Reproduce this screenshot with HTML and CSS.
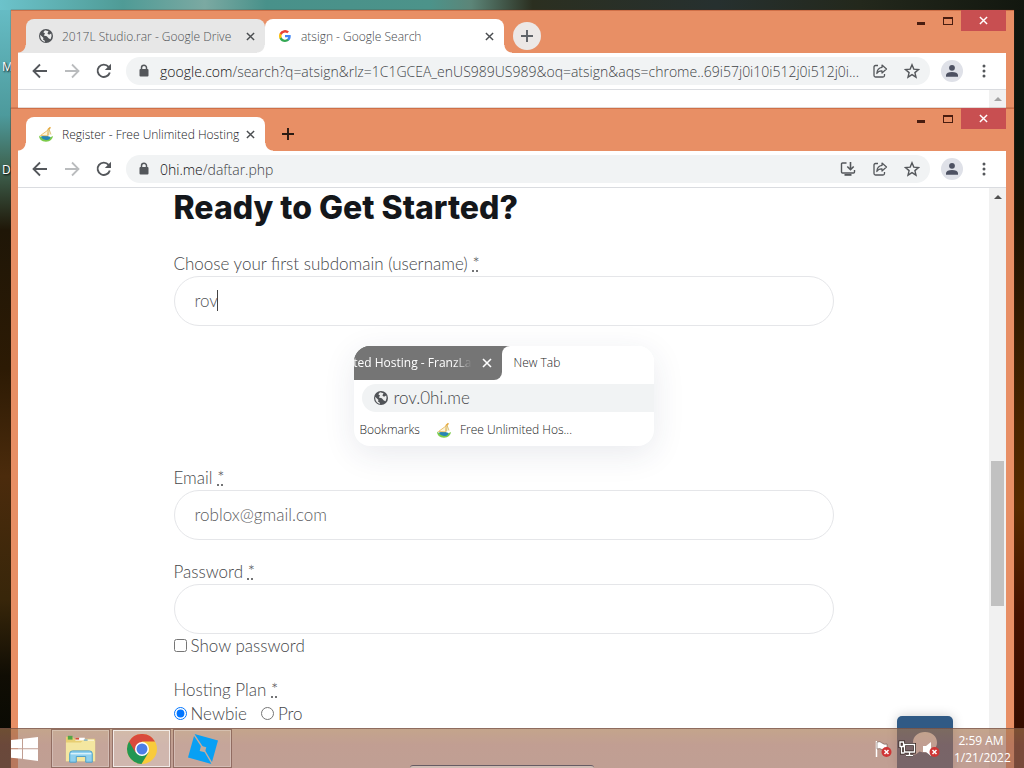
FILE: index.html
```
<!DOCTYPE html>
<html lang="en">
<head>
    <meta charset="UTF-8">
    <meta name="viewport" content="width=device-width, initial-scale=1.0">
    <title>Register - Free Unlimited Hosting</title>
    <link rel="stylesheet" href="styles.css">
</head>
<body>
    <!-- shared icons -->
    <svg class="sprite" aria-hidden="true">
        <symbol id="i-back" viewBox="0 0 16 16"><path d="M15 8H2M8 1.500L1.500 8L8 14.500" fill="none" stroke="currentColor" stroke-width="1.800"/></symbol>
        <symbol id="i-forward" viewBox="0 0 16 16"><path d="M1 8H14M8 1.500L14.500 8L8 14.500" fill="none" stroke="currentColor" stroke-width="1.800"/></symbol>
        <symbol id="i-reload" viewBox="0 0 16 16"><path d="M13.800 9.500A6.200 6.200 0 1 1 12.600 3.800" fill="none" stroke="currentColor" stroke-width="1.900"/><path d="M15 .8V7H8.800z" fill="currentColor"/></symbol>
        <symbol id="i-lock" viewBox="0 0 16 16"><rect x="3.500" y="6" width="9" height="7.500" rx="1" fill="currentColor"/><path d="M5.500 7V4.800a2.500 2.500 0 0 1 5 0V7" fill="none" stroke="currentColor" stroke-width="1.500"/></symbol>
        <symbol id="i-share" viewBox="0 0 16 16"><path d="M6 2.500H3.500Q2 2.500 2 4V12.500Q2 14 3.500 14H11Q12.500 14 12.500 12.500V11" fill="none" stroke="currentColor" stroke-width="1.300"/><path d="M10 2L14.500 6L10 10V7.800Q6.500 7.600 4.800 10.500Q5.200 5 10 4.400z" fill="none" stroke="currentColor" stroke-width="1.200" stroke-linejoin="round"/></symbol>
        <symbol id="i-star" viewBox="0 0 16 16"><path d="M8 1.800L9.800 6.100L14.500 6.500L10.900 9.600L12 14.200L8 11.700L4 14.200L5.100 9.600L1.500 6.500L6.200 6.100z" fill="none" stroke="currentColor" stroke-width="1.400"/></symbol>
        <symbol id="i-install" viewBox="0 0 16 16"><path d="M6.500 2H2.500Q1.500 2 1.500 3V11Q1.500 12 2.500 12H13.500Q14.500 12 14.500 11V9" fill="none" stroke="currentColor" stroke-width="1.400"/><path d="M4.500 13H11.500V14.800H4.500z" fill="currentColor"/><path d="M10.500 1V8M7.300 5.500L10.500 8.700L13.700 5.500" fill="none" stroke="currentColor" stroke-width="1.600"/></symbol>
        <symbol id="i-user" viewBox="0 0 22 22"><circle cx="11" cy="11" r="11" fill="#dfe1e8"/><circle cx="11" cy="7.800" r="2.900" fill="#4d5162"/><path d="M5 16.800V15Q5.500 12 11 12T17 15V16.800z" fill="#4d5162"/></symbol>
        <symbol id="i-menu" viewBox="0 0 16 16"><circle cx="8" cy="3" r="1.500"/><circle cx="8" cy="8" r="1.500"/><circle cx="8" cy="13" r="1.500"/></symbol>
        <symbol id="i-close" viewBox="0 0 10 10"><path d="M1 1L9 9M9 1L1 9" fill="none" stroke="currentColor" stroke-width="1.600"/></symbol>
        <symbol id="i-plus" viewBox="0 0 12 12"><path d="M6 0V12M0 6H12" fill="none" stroke="currentColor" stroke-width="1.900"/></symbol>
        <symbol id="i-globe" viewBox="0 0 16 16"><circle cx="8" cy="8" r="7" fill="#505357"/><path d="M2.200 6.800L5.500 10L5 11.500L6.800 12.800L7 14Q3 13 2.300 9zM7 2.300L5.300 4.200L7 5.600L5.800 7.400L8.800 8.200L10.800 10.600L12.600 11.300Q14.400 8.500 13.200 5.500L11 6.800L9.400 5.600L10.500 3.200z" fill="#eceded"/></symbol>
        <symbol id="i-google" viewBox="0 0 18 18"><path d="M17.600 9.200c0-.6-.1-1.200-.2-1.800H9v3.500h4.800a4.100 4.100 0 0 1-1.800 2.700v2.300h2.900c1.700-1.600 2.700-3.900 2.700-6.700z" fill="#4285f4"/><path d="M9 18c2.400 0 4.500-.8 6-2.200l-3-2.200a5.400 5.400 0 0 1-8-2.800H1v2.300A9 9 0 0 0 9 18z" fill="#34a853"/><path d="M4 10.700a5.400 5.400 0 0 1 0-3.400V5H1a9 9 0 0 0 0 8z" fill="#fbbc05"/><path d="M9 3.600c1.300 0 2.500.5 3.400 1.300L15 2.300A9 9 0 0 0 1 5l3 2.300a5.400 5.400 0 0 1 5-3.700z" fill="#ea4335"/></symbol>
        <symbol id="i-host" viewBox="0 0 16 16"><path d="M1 9.500Q1 15.500 8 15.800Q14.500 15 15 10Q12 12 8 11.500Q3 11.500 1 9.500z" fill="#7ccb4a"/><path d="M3 10.500Q7 9 12.500 11Q12 14.500 8 14Q4 13.500 3 10.500z" fill="#2585b5"/><path d="M2.500 9.500L10 4L9.500 9.800z" fill="#fbf3d8" stroke="#e5b450" stroke-width=".8"/><path d="M10.500 9.500L11 3L13 8.500" fill="#f5f0dc" stroke="#d6b55e" stroke-width=".8"/><path d="M9 3.500L12 .8L13 2L10.500 3.800z" fill="#e5a533"/></symbol>
    </svg>

    <div class="desktop">
        <span class="shortcut shortcut-m">M</span>
        <span class="shortcut shortcut-d">D</span>

        <!-- back window -->
        <section class="window window-back">
            <header class="titlebar">
                <div class="tabs">
                    <div class="tab tab-inactive">
                        <svg class="favicon"><use href="#i-globe"/></svg>
                        <span class="tab-title">2017L Studio.rar - Google Drive</span>
                        <button class="tab-close" aria-label="Close tab"><svg><use href="#i-close"/></svg></button>
                    </div>
                    <div class="tab tab-unfocused">
                        <svg class="favicon favicon-google"><use href="#i-google"/></svg>
                        <span class="tab-title">atsign - Google Search</span>
                        <button class="tab-close" aria-label="Close tab"><svg><use href="#i-close"/></svg></button>
                    </div>
                    <button class="new-tab new-tab-round" aria-label="New tab"><svg><use href="#i-plus"/></svg></button>
                </div>
                <div class="controls">
                    <button class="minimize" aria-label="Minimize"></button>
                    <button class="maximize" aria-label="Maximize"></button>
                    <button class="close" aria-label="Close"><svg><use href="#i-close"/></svg></button>
                </div>
            </header>
            <nav class="toolbar">
                <button class="tool" aria-label="Back"><svg><use href="#i-back"/></svg></button>
                <button class="tool disabled" aria-label="Forward"><svg><use href="#i-forward"/></svg></button>
                <button class="tool" aria-label="Reload"><svg><use href="#i-reload"/></svg></button>
                <div class="omnibox">
                    <svg class="lock"><use href="#i-lock"/></svg>
                    <label for="url_back">google.com</label>
                    <input type="text" id="url_back" value="/search?q=atsign&amp;rlz=1C1GCEA_enUS989US989&amp;oq=atsign&amp;aqs=chrome..69i57j0i10i512j0i512j0i...">
                    <button class="tool" aria-label="Share"><svg><use href="#i-share"/></svg></button>
                    <button class="tool" aria-label="Bookmark"><svg><use href="#i-star"/></svg></button>
                </div>
                <button class="profile" aria-label="Profile"><svg><use href="#i-user"/></svg></button>
                <button class="tool" aria-label="Menu"><svg><use href="#i-menu"/></svg></button>
            </nav>
            <div class="viewport">
                <div class="page"></div>
                <div class="scrollbar scrollbar-faded"><span class="arrow-up"></span></div>
            </div>
        </section>

        <!-- front window -->
        <section class="window window-front">
            <header class="titlebar">
                <div class="tabs">
                    <div class="tab">
                        <svg class="favicon"><use href="#i-host"/></svg>
                        <span class="tab-title">Register - Free Unlimited Hosting</span>
                        <button class="tab-close" aria-label="Close tab"><svg><use href="#i-close"/></svg></button>
                    </div>
                    <button class="new-tab" aria-label="New tab"><svg><use href="#i-plus"/></svg></button>
                </div>
                <div class="controls">
                    <button class="minimize" aria-label="Minimize"></button>
                    <button class="maximize" aria-label="Maximize"></button>
                    <button class="close" aria-label="Close"><svg><use href="#i-close"/></svg></button>
                </div>
            </header>
            <nav class="toolbar">
                <button class="tool" aria-label="Back"><svg><use href="#i-back"/></svg></button>
                <button class="tool disabled" aria-label="Forward"><svg><use href="#i-forward"/></svg></button>
                <button class="tool" aria-label="Reload"><svg><use href="#i-reload"/></svg></button>
                <div class="omnibox">
                    <svg class="lock"><use href="#i-lock"/></svg>
                    <label for="url_front">0hi.me</label>
                    <input type="text" id="url_front" value="/daftar.php">
                    <button class="tool" aria-label="Install"><svg><use href="#i-install"/></svg></button>
                    <button class="tool" aria-label="Share"><svg><use href="#i-share"/></svg></button>
                    <button class="tool" aria-label="Bookmark"><svg><use href="#i-star"/></svg></button>
                </div>
                <button class="profile" aria-label="Profile"><svg><use href="#i-user"/></svg></button>
                <button class="tool" aria-label="Menu"><svg><use href="#i-menu"/></svg></button>
            </nav>
            <div class="viewport">
                <main class="page">
                    <form class="register">
                        <h1>Ready to Get Started?</h1>
                        <div class="field">
                            <label for="username">Choose your first subdomain (username) <abbr title="required">*</abbr></label>
                            <div class="input-wrap">
                                <input type="text" id="username" value="rov">
                                <span class="caret"></span>
                            </div>
                        </div>

                        <div class="preview">
                            <div class="preview-tabs">
                                <div class="preview-old">
                                    <span class="preview-title">ited Hosting - FranzLa</span>
                                    <svg class="preview-x"><use href="#i-close"/></svg>
                                </div>
                                <div class="preview-new">New Tab</div>
                            </div>
                            <div class="preview-url">
                                <svg><use href="#i-globe"/></svg>
                                <span>rov.0hi.me</span>
                            </div>
                            <div class="preview-bookmarks">
                                <span>Bookmarks</span>
                                <svg><use href="#i-host"/></svg>
                                <span>Free Unlimited Hos...</span>
                            </div>
                        </div>

                        <div class="field">
                            <label for="email">Email <abbr title="required">*</abbr></label>
                            <input type="email" id="email" placeholder="roblox@gmail.com">
                        </div>
                        <div class="field">
                            <label for="password">Password <abbr title="required">*</abbr></label>
                            <input type="password" id="password">
                            <div class="choices">
                                <label class="choice"><input type="checkbox" id="show_password">Show password</label>
                            </div>
                        </div>
                        <div class="field">
                            <span class="field-name">Hosting Plan <abbr title="required">*</abbr></span>
                            <div class="choices">
                                <label class="choice"><input type="radio" name="plan" checked>Newbie</label>
                                <label class="choice"><input type="radio" name="plan">Pro</label>
                            </div>
                        </div>
                    </form>
                    <button type="button" class="chat" aria-label="Chat">
                        <svg viewBox="0 0 26 26"><path d="M13 1C20 1 25 5.500 25 11.500S20 21.500 13.500 21.500Q10 21.500 7.500 20.500Q5 23.500 1 24Q4 21 3.500 17.500Q1 15 1 11.500C1 5.500 6 1 13 1z" fill="#fff"/></svg>
                    </button>
                </main>
                <div class="scrollbar"><span class="arrow-up"></span><span class="thumb"></span></div>
            </div>
        </section>

        <!-- taskbar -->
        <footer class="taskbar">
            <button class="start" aria-label="Start">
                <svg viewBox="0 0 28 24"><path d="M0 3L11 2V11.300H0zM12 1.800L27 0V11.300H12zM0 12.300H11V21.800L0 20.800zM12 12.300H27V24L12 22z" fill="#fff"/></svg>
            </button>
            <button class="task" aria-label="File Explorer">
                <svg viewBox="0 0 34 30"><path d="M1 4V2H8L10 4H32V28H1z" fill="#e8cf72"/><path d="M3 1H8V5H3z" fill="#53a648"/><path d="M11 3H21V6H11z" fill="#fff"/><path d="M11 3H15V5H11z" fill="#d3513a"/><path d="M20 5H31V8H20z" fill="#fff"/><path d="M20 5H24V7H20z" fill="#3f8bd0"/><path d="M1 8H17L19 6H32V28H1z" fill="#f4e6a0"/><path d="M5 29V20Q5 17 8 17H26Q29 17 29 20V29H22V23H12V29z" fill="#8fd0ee" stroke="#4a9dc9"/><path d="M6 20H28" stroke="#d7f1fb" stroke-width="1.500"/></svg>
            </button>
            <button class="task task-active" aria-label="Google Chrome">
                <svg viewBox="0 0 30 30"><circle cx="15" cy="15" r="15" fill="#f8cb3c"/><path d="M15 15L2 7.500A15 15 0 0 0 14.500 30L21.500 18.500z" fill="#219653"/><path d="M2 7.500A15 15 0 0 1 28 7.500H15L8.500 18.500z" fill="#d94a3d"/><circle cx="15" cy="15" r="7" fill="#fff"/><circle cx="15" cy="15" r="5.500" fill="#4c7ee8"/></svg>
            </button>
            <button class="task" aria-label="Roblox Studio">
                <svg viewBox="0 0 32 32"><path d="M7 0L32 7L25 32L0 25z" fill="#08a0f4"/><path d="M6 0L16 15L26 32" fill="none" stroke="#c5ab9c" stroke-width="1.500"/><path d="M13.800 12.500L19.500 14L18 19.500L12.500 18z" fill="#c5ab9c"/></svg>
            </button>
            <div class="tray">
                <svg viewBox="0 0 18 18"><path d="M2.500 1V17" stroke="#fff" stroke-width="1.500"/><path d="M3 2Q6 1 8 3T13 4V10Q10 11 8 9.500T3 9z" fill="#fff" stroke="#573d35" stroke-width=".5"/><circle cx="12.500" cy="12" r="5" fill="#cf3535"/><path d="M10.500 10L14.500 14M14.500 10L10.500 14" stroke="#fff" stroke-width="1.500"/></svg>
                <svg viewBox="0 0 18 18"><path d="M6.500 4.500H16.500V12H6.500zM11.500 12V15M8 15.500H15M3.500 7V13H6.500M2 2H5.500V6.500H2z" fill="none" stroke="#33231f" stroke-width="3"/><path d="M6.500 4.500H16.500V12H6.500zM11.500 12V15M8 15.500H15M3.500 7V13H6.500M2 2H5.500V6.500H2z" fill="none" stroke="#fff" stroke-width="1.400"/></svg>
                <svg viewBox="0 0 18 18"><path d="M1 6H4L9 2V16L4 12H1z" fill="#fff"/><circle cx="12.500" cy="12" r="5" fill="#cf3535"/><path d="M10.500 10L14.500 14M14.500 10L10.500 14" stroke="#fff" stroke-width="1.500"/></svg>
            </div>
            <div class="clock">
                <span>2:59 AM</span>
                <span>1/21/2022</span>
            </div>
        </footer>
    </div>
</body>
</html>
```
FILE: styles.css
```
* {
    box-sizing: border-box;
}

body {
    margin: 0;
    font-family: "Open Sans", "Noto Sans", sans-serif;
    font-size: 12px;
    font-weight: 300;
    color: #202124;
}

button {
    display: flex;
    align-items: center;
    justify-content: center;
    flex: none;
    padding: 0;
    border: none;
    background: none;
    color: inherit;
}

.sprite {
    position: absolute;
    width: 0;
    height: 0;
}

.desktop {
    position: relative;
    height: 100vh;
    overflow: hidden;
    background:
        linear-gradient(90deg, #6cc3cb, #4f9b96 12%, #7ba9a2 20%, #48918a 26%, #4c938a 42%, #5c8578 46%, #2b2f20 52%, #26302f 70%, #23281c 84%, #12170f) top / 100% 10px no-repeat,
        linear-gradient(#68bfc8, #4d9a9c 15%, #3f6350 22%, #1f1607 30%, #2c1a04 48%, #4b2b0c 62%, #38260a 78%, #100d04 88%, #050803) left / 50% 100% no-repeat,
        linear-gradient(#12170f, #0c150c 18%, #1c1202 28%, #4a2500 55%, #572b00 66%, #451200 80%, #2f0b00) right / 50% 100% no-repeat;
}

/* desktop labels that stick out behind the windows */
.shortcut {
    position: absolute;
    left: 2px;
    color: #fff;
    font-weight: 400;
    text-shadow: 1px 1px 2px #000;
}

.shortcut-m {
    top: 58px;
}

.shortcut-d {
    top: 161px;
}

/* windows */
.window {
    position: absolute;
    left: 11px;
    right: 10px;
    bottom: 0;
    display: flex;
    flex-direction: column;
    padding: 0 8px 0 7px;
    background: #e88f65;
    box-shadow: inset 0 1px #cf7048, 0 0 1px #5a2d18;
}

.window-back {
    top: 10px;
}

.window-front {
    top: 108px;
}

.titlebar {
    display: flex;
    flex: none;
    align-items: flex-start;
    justify-content: space-between;
    height: 43px;
}

.tabs {
    display: flex;
    padding: 9px 8px 0;
}

.tab {
    --tab: #fff;
    position: relative;
    display: flex;
    align-items: center;
    width: 239px;
    height: 34px;
    padding: 0 9px 0 12px;
    border-radius: 8px 8px 0 0;
    background: var(--tab);
}

.tab::before,
.tab::after {
    content: "";
    position: absolute;
    bottom: 0;
    width: 8px;
    height: 8px;
}

.tab::before {
    right: 100%;
    background: radial-gradient(circle at 0 0, transparent 7px, var(--tab) 8px);
}

.tab::after {
    left: 100%;
    background: radial-gradient(circle at 100% 0, transparent 7px, var(--tab) 8px);
}

.tab-inactive {
    --tab: #e7e7e7;
    color: #505356;
}

.tab-unfocused {
    color: #45484b;
}

.favicon {
    flex: none;
    width: 16px;
    height: 16px;
    margin-right: 8px;
}

.favicon-google {
    padding: 2px;
}

.tab-title {
    flex: 1;
    overflow: hidden;
    white-space: nowrap;
}

.tab-close {
    width: 12px;
    height: 16px;
    color: #4a4d50;
}

.tab-close svg {
    width: 9px;
    height: 9px;
}

.new-tab {
    width: 28px;
    height: 28px;
    margin: 3px 9px;
    border-radius: 50%;
    color: #2a1a12;
}

.new-tab-round {
    background: #ece8e6;
    color: #5f6368;
}

.new-tab svg {
    width: 12px;
    height: 12px;
}

.controls {
    display: flex;
    align-items: center;
}

.minimize {
    width: 8px;
    height: 3px;
    margin-top: 6px;
    background: #491d10;
}

.maximize {
    width: 10px;
    height: 8px;
    margin: 0 8px 0 18px;
    border: 1px solid #491d10;
    border-top-width: 2px;
}

.close {
    width: 45px;
    height: 21px;
    background: #c84f51;
    color: #fff;
}

.close svg {
    width: 9px;
    height: 9px;
}

.toolbar {
    display: flex;
    flex: none;
    align-items: center;
    height: 37px;
    padding: 0 6px;
    border-bottom: 1px solid #dadce0;
    background: #fff;
    color: #54575b;
}

.tool {
    width: 32px;
    height: 28px;
}

.tool svg {
    width: 16px;
    height: 16px;
    fill: currentColor;
}

.disabled {
    color: #babcbe;
}

.omnibox {
    display: flex;
    flex: 1;
    align-items: center;
    min-width: 0;
    height: 28px;
    margin: 0 6px;
    padding: 0 2px 0 10px;
    border-radius: 14px;
    background: #f1f3f4;
    font-size: 14px;
}

.lock {
    flex: none;
    width: 16px;
    height: 16px;
    margin-right: 8px;
}

.omnibox label {
    color: #101112;
}

.omnibox input {
    flex: 1;
    min-width: 0;
    padding: 0;
    border: none;
    outline: none;
    background: none;
    color: #3f4347;
    font: inherit;
    text-overflow: ellipsis;
}

.profile {
    width: 32px;
}

.profile svg {
    width: 22px;
    height: 22px;
}

.viewport {
    display: flex;
    flex: 1;
    min-height: 0;
    background: #fff;
}

.page {
    position: relative;
    flex: 1;
    overflow: hidden;
}

.scrollbar {
    display: flex;
    flex-direction: column;
    align-items: center;
    width: 17px;
    background: #f1f1f1;
}

.scrollbar::after {
    content: "";
    flex: 0 0 28%;
}

.arrow-up {
    flex: none;
    margin: 7px 0;
    border: 4px solid transparent;
    border-top: none;
    border-bottom-color: #505050;
}

.scrollbar-faded .arrow-up {
    border-bottom-color: #a3a3a3;
}

.thumb {
    flex: 0 0 25%;
    width: 13px;
    margin-top: auto;
    background: #c1c1c1;
}

/* registration form */
.register {
    display: flex;
    flex-direction: column;
    gap: 20px;
    max-width: 660px;
    margin: 0 auto;
    color: #46474a;
    font-family: Lato, sans-serif;
    font-size: 17px;
    line-height: 24px;
}

h1 {
    margin: 0 0 4px;
    color: #14171b;
    font-family: Inter, sans-serif;
    font-size: 32px;
    font-weight: 800;
    line-height: 40px;
}

.field > label,
.field-name {
    display: block;
}

.input-wrap {
    position: relative;
}

.field input[type="text"],
.field input[type="email"],
.field input[type="password"] {
    display: block;
    width: 100%;
    height: 50px;
    padding: 0 20px 2px;
    border: 1px solid #e5e6e9;
    border-radius: 25px;
    outline: none;
    background: #fff;
    color: #55565a;
    font: inherit;
}

.field input::placeholder {
    color: #5c5d61;
}

.caret {
    position: absolute;
    top: 14px;
    left: 43px;
    width: 1px;
    height: 21px;
    background: #444;
}

.choices {
    display: flex;
    gap: 14px;
}

.choice {
    display: flex;
    align-items: center;
}

.choice input {
    width: 13px;
    height: 13px;
    margin: 0 4px 2px 0;
}

/* browser preview under the username */
.preview {
    align-self: center;
    width: 300px;
    max-width: 100%;
    height: 100px;
    border-radius: 16px;
    overflow: hidden;
    background: #fff;
    box-shadow: 0 8px 32px rgba(40, 50, 90, 0.1);
    color: #242526;
    font-family: "Open Sans", "Noto Sans", sans-serif;
    font-size: 12px;
}

.preview-tabs {
    display: flex;
    height: 34px;
    background: linear-gradient(90deg, #757575 156px, #fff 156px) top / 100% 50% no-repeat;
}

.preview-old {
    display: flex;
    align-items: center;
    justify-content: flex-end;
    gap: 10px;
    width: 148px;
    padding-right: 10px;
    border-bottom-right-radius: 8px;
    background: #757575;
    color: #fff;
    font-weight: 400;
}

.preview-title {
    flex: none;
    white-space: nowrap;
    -webkit-mask-image: linear-gradient(90deg, #000 85%, transparent);
    mask-image: linear-gradient(90deg, #000 85%, transparent);
}

.preview-x {
    flex: none;
    width: 10px;
    height: 10px;
}

.preview-new {
    flex: 1;
    padding: 5px 12px;
    border-top-left-radius: 8px;
    background: #fff;
}

.preview-url {
    display: flex;
    align-items: center;
    gap: 5px;
    height: 28px;
    margin: 4px 0 4px 8px;
    padding-left: 11px;
    border-radius: 14px 0 0 14px;
    background: #f1f3f4;
    color: #46474a;
    font-family: Lato, sans-serif;
    font-size: 17px;
}

.preview-url svg,
.preview-bookmarks svg {
    width: 16px;
    height: 16px;
}

.preview-bookmarks {
    display: flex;
    align-items: center;
    padding: 2px 6px;
}

.preview-bookmarks svg {
    margin: 0 8px 0 16px;
}

.chat {
    position: absolute;
    right: 36px;
    bottom: -4px;
    width: 56px;
    height: 56px;
    border-radius: 5px;
    background: #305a85;
    box-shadow: 0 0 12px rgba(0, 0, 0, 0.2);
}

.chat svg {
    width: 26px;
    height: 26px;
}

/* taskbar */
.taskbar {
    position: absolute;
    left: 0;
    right: 0;
    bottom: 0;
    display: flex;
    align-items: center;
    height: 40px;
    border-top: 1px solid rgba(110, 75, 60, 0.6);
    background: linear-gradient(rgba(164, 116, 78, 0.65), rgba(160, 106, 88, 0.65) 40%, rgba(158, 108, 90, 0.65));
    color: #fff;
    font-weight: 400;
}

.taskbar::after {
    content: "";
    position: absolute;
    bottom: 0;
    left: 40%;
    width: 18%;
    height: 2px;
    border-top: 1px solid #665c63;
    border-radius: 4px 4px 0 0;
    background: #d0bdb5;
}

.start {
    width: 49px;
}

.start svg {
    width: 28px;
    height: 24px;
}

.task {
    width: 59px;
    height: 39px;
    margin-left: 2px;
    border: 1px solid rgba(110, 70, 60, 0.6);
    box-shadow: inset 0 0 0 1px rgba(255, 255, 255, 0.25);
    background: rgba(255, 255, 255, 0.08);
}

.task-active {
    background: rgba(255, 255, 255, 0.25);
    box-shadow: inset 0 0 0 1px rgba(255, 255, 255, 0.7);
}

.task svg {
    width: 32px;
    height: 30px;
}

.tray {
    display: flex;
    gap: 6px;
    margin-left: auto;
}

.tray svg {
    width: 18px;
    height: 18px;
}

.clock {
    width: 54px;
    margin: 0 16px 0 14px;
    line-height: 17px;
    text-align: center;
}

.clock span {
    display: block;
}
```
